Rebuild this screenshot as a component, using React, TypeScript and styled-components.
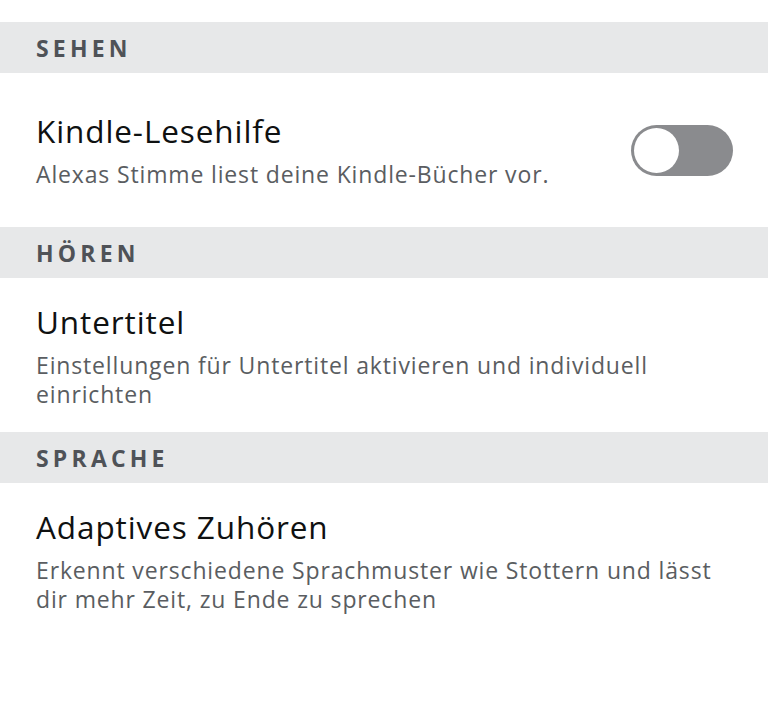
import React from "react";
import styled, { createGlobalStyle } from "styled-components";

const Global = createGlobalStyle`
  html, body { margin: 0; padding: 0; background: #ffffff; }
  body { font-family: "Open Sans", "Noto Sans", sans-serif; -webkit-font-smoothing: antialiased; }
`;

const Page = styled.div`
  width: 768px;
  height: 726px;
  background: #ffffff;
  padding-top: 22px;
  box-sizing: border-box;
  display: flex;
  flex-direction: column;
`;

const SectionHeader = styled.div`
  height: 51px;
  flex-shrink: 0;
  background: #e7e8e9;
  display: flex;
  align-items: center;
  padding: 0 36px;
  font-size: 23px;
  font-weight: 700;
  letter-spacing: 4.2px;
  color: #4f5257;
`;

const Row = styled.div`
  height: 154px;
  flex-shrink: 0;
  box-sizing: border-box;
  padding: 0 35px 0 36px;
  display: flex;
  align-items: center;
  gap: 24px;
`;

const TextCol = styled.div`
  flex: 1;
  display: flex;
  flex-direction: column;
`;

const Title = styled.div`
  font-size: 31.5px;
  line-height: 40px;
  letter-spacing: 0.9px;
  color: #0f1111;
  margin-bottom: 9px;
`;

const Desc = styled.div`
  font-size: 23px;
  line-height: 29px;
  letter-spacing: 0.85px;
  color: #5a5d61;
`;

const Toggle = styled.div`
  width: 102px;
  height: 51px;
  border-radius: 26px;
  background: #8a8b8e;
  display: flex;
  align-items: center;
  padding: 0 3px;
  box-sizing: border-box;
  flex-shrink: 0;
`;

const Knob = styled.div`
  width: 45px;
  height: 45px;
  border-radius: 50%;
  background: #ffffff;
`;

type Item = { title: string; desc: string; toggle?: boolean };
const sections: { header: string; item: Item }[] = [
  { header: "SEHEN", item: { title: "Kindle-Lesehilfe", desc: "Alexas Stimme liest deine Kindle-Bücher vor.", toggle: true } },
  { header: "HÖREN", item: { title: "Untertitel", desc: "Einstellungen für Untertitel aktivieren und individuell einrichten" } },
  { header: "SPRACHE", item: { title: "Adaptives Zuhören", desc: "Erkennt verschiedene Sprachmuster wie Stottern und lässt dir mehr Zeit, zu Ende zu sprechen" } },
];

export default function App() {
  return (
    <>
      <Global />
      <Page>
        {sections.map((s) => (
          <React.Fragment key={s.header}>
            <SectionHeader>{s.header}</SectionHeader>
            <Row>
              <TextCol>
                <Title>{s.item.title}</Title>
                <Desc>{s.item.desc}</Desc>
              </TextCol>
              {s.item.toggle && (
                <Toggle>
                  <Knob />
                </Toggle>
              )}
            </Row>
          </React.Fragment>
        ))}
      </Page>
    </>
  );
}
